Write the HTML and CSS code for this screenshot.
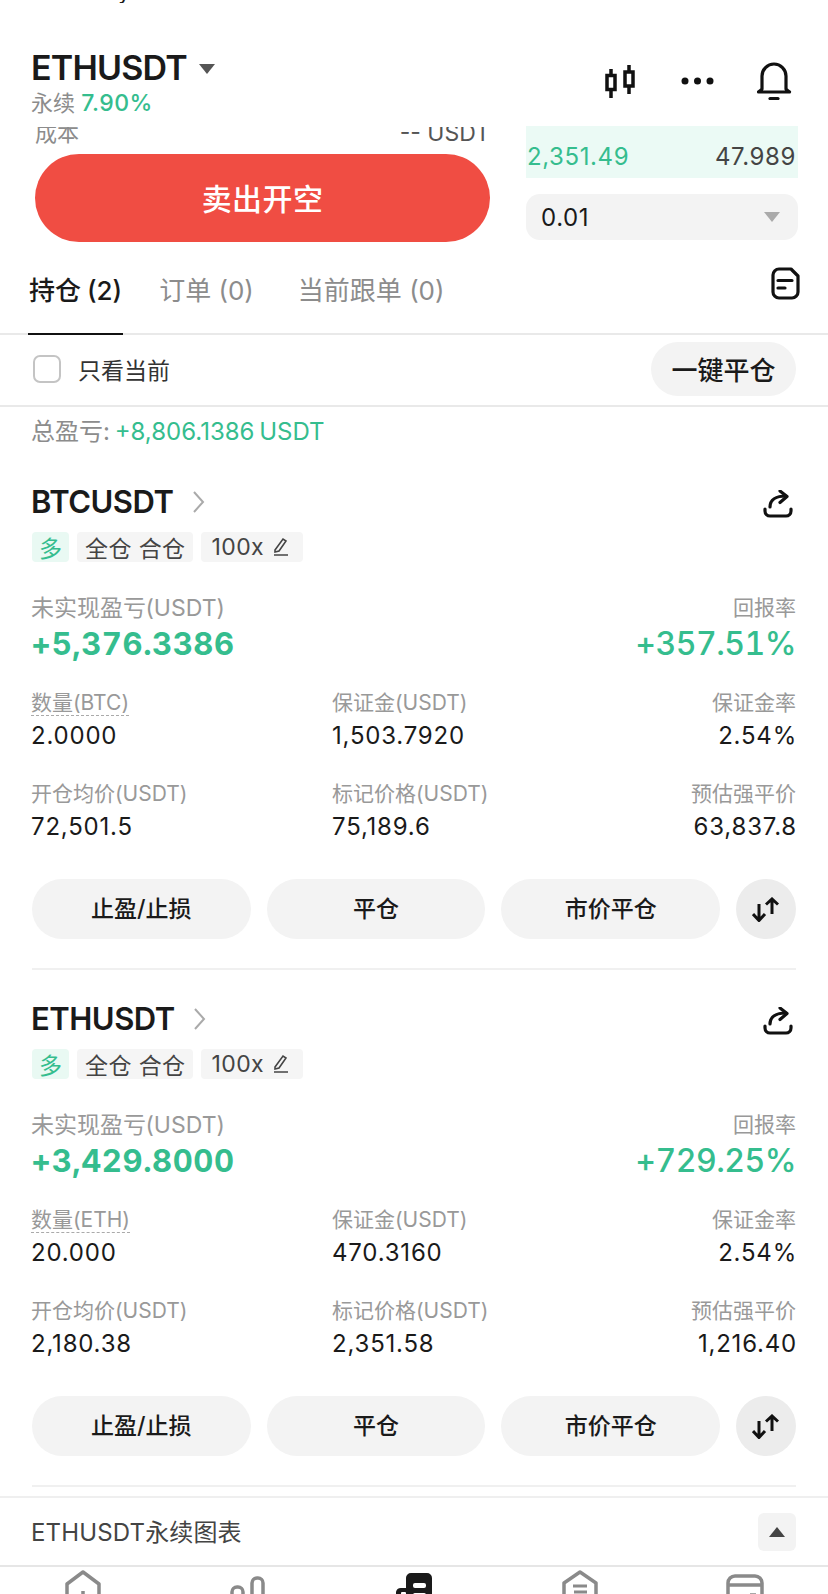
FILE: index.html
```html
<!DOCTYPE html>
<html lang="en">
<head>
    <meta charset="UTF-8">
    <meta name="viewport" content="width=device-width, initial-scale=1.0">
    <title>ETHUSDT 永续</title>
    <link rel="stylesheet" href="styles.css">
</head>
<body>
    <div class="status-clip"><span>y</span></div>

    <!-- Top bar with pair name and actions -->
    <header class="top-bar">
        <div class="pair">
            <div class="pair-name">ETHUSDT <span class="caret"></span></div>
            <div class="pair-sub">永续 <span class="green">7.90%</span></div>
        </div>
        <div class="top-icons">
            <svg width="30" height="33" viewBox="0 0 30 33" fill="none" stroke="#111" stroke-width="3.500"><rect x="2" y="10.500" width="8" height="14"/><rect x="20" y="7" width="8" height="14"/><path d="M6 4v6M6 25v8M24 0v7M24 21v8"/></svg>
            <svg class="dots" width="36" height="8" viewBox="0 0 36 8" fill="#111"><circle cx="5" cy="4" r="3.500"/><circle cx="17.500" cy="4" r="3.500"/><circle cx="30" cy="4" r="3.500"/></svg>
            <svg width="36" height="38" viewBox="0 0 36 38" fill="none" stroke="#111" stroke-width="3.200" stroke-linecap="round" stroke-linejoin="round"><path d="M6 27V14a12 12 0 0 1 24 0v13c1 1.500 2 2.200 3.500 3H2.500C4 29.200 5 28.500 6 27z"/><path d="M14 36.500h8"/></svg>
        </div>
    </header>

    <!-- Order form, scrolled so its top is cut off -->
    <section class="trade">
        <div class="trade-left">
            <div class="cost-clip">
                <span class="cost-label">成本</span>
                <span class="cost-value">-- USDT</span>
            </div>
            <div class="sell-btn">卖出开空</div>
        </div>
        <div class="trade-right">
            <div class="book-row"><span class="green">2,351.49</span><span class="book-size">47.989</span></div>
            <div class="qty-select"><span>0.01</span><span class="caret caret-light"></span></div>
        </div>
    </section>

    <!-- Tabs -->
    <nav class="tabs">
        <div class="tab tab-active">持仓 (2)</div>
        <div class="tab">订单 (0)</div>
        <div class="tab">当前跟单 (0)</div>
        <svg class="tab-icon" width="29" height="33" viewBox="0 0 29 33" fill="none" stroke="#111" stroke-width="3.200" stroke-linecap="round" stroke-linejoin="round"><path d="M8 2h12l7 7v16a6 6 0 0 1-6 6H8a6 6 0 0 1-6-6V8a6 6 0 0 1 6-6z"/><path d="M7 13.500h14M7 21h7"/></svg>
    </nav>

    <div class="filter-row">
        <label class="only-current"><span class="checkbox"></span>只看当前</label>
        <div class="close-all">一键平仓</div>
    </div>

    <div class="total-pnl">总盈亏: <span class="green">+8,806.1386 USDT</span></div>

    <!-- Position cards -->
    <main class="positions">
        <article class="card">
            <div class="card-head">
                <div class="card-title">BTCUSDT <svg class="chevron" width="12" height="22" viewBox="0 0 12 22" fill="none" stroke="#aaa" stroke-width="2"><path d="M1 1l9 10-9 10"/></svg></div>
                <svg width="30" height="28" viewBox="0 0 30 28" fill="none" stroke="#111" stroke-width="3.200" stroke-linecap="round" stroke-linejoin="round"><path d="M2 19v2a5 5 0 0 0 5 5h16a5 5 0 0 0 5-5v-2"/><path d="M7 17c0-7 6-11 16-11"/><path d="M17 1l7 5.500-7 6"/></svg>
            </div>
            <div class="tags">
                <span class="tag tag-long">多</span>
                <span class="tag">全仓 合仓</span>
                <span class="tag tag-lever">100x <svg width="18" height="20" viewBox="0 0 18 20" fill="none" stroke="#444" stroke-width="1.600"><path d="M3 13L11 2l3 2-7 10-4 1zM2 18h14"/></svg></span>
            </div>
            <div class="pnl-row">
                <div><div class="label label-big">未实现盈亏 (USDT)</div><div class="pnl-value">+5,376.3386</div></div>
                <div class="right"><div class="label">回报率</div><div class="rate-value">+357.51%</div></div>
            </div>
            <div class="stats">
                <div><div class="label"><span class="dashed">数量 (BTC)</span></div><div class="value">2.0000</div></div>
                <div><div class="label">保证金 (USDT)</div><div class="value">1,503.7920</div></div>
                <div class="right"><div class="label">保证金率</div><div class="value">2.54%</div></div>
                <div><div class="label">开仓均价 (USDT)</div><div class="value">72,501.5</div></div>
                <div><div class="label">标记价格 (USDT)</div><div class="value">75,189.6</div></div>
                <div class="right"><div class="label">预估强平价</div><div class="value">63,837.8</div></div>
            </div>
            <div class="actions">
                <div class="action">止盈/止损</div>
                <div class="action">平仓</div>
                <div class="action">市价平仓</div>
                <div class="action-round"><svg width="28" height="25" viewBox="0 0 28 25" fill="none" stroke="#111" stroke-width="3"><path d="M7 7v17M1 17l6 6.500 6-6.500M20 17V2M14 7.500L20 2l6 5.500"/></svg></div>
            </div>
        </article>

        <article class="card">
            <div class="card-head">
                <div class="card-title">ETHUSDT <svg class="chevron" width="12" height="22" viewBox="0 0 12 22" fill="none" stroke="#aaa" stroke-width="2"><path d="M1 1l9 10-9 10"/></svg></div>
                <svg width="30" height="28" viewBox="0 0 30 28" fill="none" stroke="#111" stroke-width="3.200" stroke-linecap="round" stroke-linejoin="round"><path d="M2 19v2a5 5 0 0 0 5 5h16a5 5 0 0 0 5-5v-2"/><path d="M7 17c0-7 6-11 16-11"/><path d="M17 1l7 5.500-7 6"/></svg>
            </div>
            <div class="tags">
                <span class="tag tag-long">多</span>
                <span class="tag">全仓 合仓</span>
                <span class="tag tag-lever">100x <svg width="18" height="20" viewBox="0 0 18 20" fill="none" stroke="#444" stroke-width="1.600"><path d="M3 13L11 2l3 2-7 10-4 1zM2 18h14"/></svg></span>
            </div>
            <div class="pnl-row">
                <div><div class="label label-big">未实现盈亏 (USDT)</div><div class="pnl-value">+3,429.8000</div></div>
                <div class="right"><div class="label">回报率</div><div class="rate-value">+729.25%</div></div>
            </div>
            <div class="stats">
                <div><div class="label"><span class="dashed">数量 (ETH)</span></div><div class="value">20.000</div></div>
                <div><div class="label">保证金 (USDT)</div><div class="value">470.3160</div></div>
                <div class="right"><div class="label">保证金率</div><div class="value">2.54%</div></div>
                <div><div class="label">开仓均价 (USDT)</div><div class="value">2,180.38</div></div>
                <div><div class="label">标记价格 (USDT)</div><div class="value">2,351.58</div></div>
                <div class="right"><div class="label">预估强平价</div><div class="value">1,216.40</div></div>
            </div>
            <div class="actions">
                <div class="action">止盈/止损</div>
                <div class="action">平仓</div>
                <div class="action">市价平仓</div>
                <div class="action-round"><svg width="28" height="25" viewBox="0 0 28 25" fill="none" stroke="#111" stroke-width="3"><path d="M7 7v17M1 17l6 6.500 6-6.500M20 17V2M14 7.500L20 2l6 5.500"/></svg></div>
            </div>
        </article>
    </main>

    <!-- Collapsed chart bar -->
    <div class="chart-bar">
        <span class="chart-title">ETHUSDT永续图表</span>
        <div class="chart-toggle"><span class="caret caret-up"></span></div>
    </div>

    <!-- Bottom navigation, cut off by the window -->
    <footer class="bottom-nav">
        <svg width="36" height="34" viewBox="0 0 36 34" fill="none" stroke="#8a8a8a" stroke-width="3.500" stroke-linejoin="round"><path d="M2 16L18 4l16 12v20H2z"/><path d="M18 23v6"/></svg>
        <svg width="36" height="34" viewBox="0 0 36 34" fill="none" stroke="#8a8a8a" stroke-width="3.500"><rect x="2" y="19" width="11" height="24" rx="5"/><rect x="22" y="10" width="11" height="34" rx="5"/></svg>
        <svg width="38" height="34" viewBox="0 0 38 34" fill="#1a1a1a"><path d="M11 10a5 5 0 0 1 5-5h16a5 5 0 0 1 5 5v26H1V24a5 5 0 0 1 5-4h5z"/><rect x="18" y="15" width="13" height="5" rx="2" fill="#fff"/><rect x="18" y="25" width="13" height="5" rx="2" fill="#fff"/><rect x="6" y="24" width="5" height="8" rx="1" fill="#fff"/></svg>
        <svg width="36" height="34" viewBox="0 0 36 34" fill="none" stroke="#8a8a8a" stroke-width="3.500" stroke-linejoin="round"><path d="M2 15L18 4l16 11v24H2z"/><path d="M11 18h14M12 24h13" stroke-width="3"/></svg>
        <svg width="38" height="34" viewBox="0 0 38 34" fill="none" stroke="#8a8a8a" stroke-width="3.500"><rect x="2" y="8" width="34" height="36" rx="7"/><path d="M2 17h34M24 27h6"/></svg>
    </footer>
</body>
</html>
```

FILE: styles.css
```css
/* Global styling */
* {
    box-sizing: border-box;
}
html, body {
    margin: 0;
    height: 1594px;
    overflow: hidden;
}
body {
    font-family: Inter, "Noto Sans CJK SC", sans-serif;
    color: #1a1a1a;
    background: #fff;
}
.green {
    color: #35bd8e;
}
.right {
    text-align: right;
}

/* Triangle carets */
.caret {
    display: inline-block;
    border-left: 8px solid transparent;
    border-right: 8px solid transparent;
    border-top: 10px solid #555;
    vertical-align: middle;
}
.caret-light {
    border-top-color: #aaa;
}
.caret-up {
    border-top: 0;
    border-bottom: 10px solid #444;
}

.status-clip {
    height: 3px;
    padding-left: 118px;
    overflow: hidden;
    font-size: 22px;
    line-height: 3px;
}
.status-clip span {
    display: block;
    margin-top: -10px;
}

/* Top bar */
.top-bar {
    height: 122px;
    padding: 43px 36px 0 31px;
    display: flex;
    justify-content: space-between;
}
.pair-name {
    font-size: 34px;
    line-height: 44px;
    font-weight: 600;
    letter-spacing: -0.8px;
}
.pair-name .caret {
    margin: -4px 0 0 4px;
}
.pair-sub {
    font-size: 22px;
    line-height: 28px;
    color: #8c8c8c;
    margin-top: -1px;
}
.pair-sub .green {
    font-size: 23px;
    font-weight: 500;
    letter-spacing: 0.5px;
}
.top-icons {
    display: flex;
    align-items: center;
    gap: 45px;
    height: 70px;
}
.top-icons .dots {
    margin-right: -5px;
}

/* Order form */
.trade {
    display: flex;
    justify-content: space-between;
    height: 117px;
    padding: 0 30px 0 35px;
}
.trade-left {
    width: 455px;
}
.cost-clip {
    height: 27px;
    margin-top: 2px;
    overflow: hidden;
    display: flex;
    justify-content: space-between;
    font-size: 22px;
    line-height: 24px;
    color: #555;
}
.cost-label {
    margin-top: -6px;
    color: #8c8c8c;
}
.cost-value {
    margin-top: -6px;
    font-size: 23px;
}
.sell-btn {
    height: 88px;
    border-radius: 44px;
    background: #f04d43;
    color: #fff;
    font-size: 30px;
    font-weight: 500;
    line-height: 90px;
    letter-spacing: 0.4px;
    text-align: center;
}
.trade-right {
    width: 272px;
    padding-top: 1px;
}
.book-row {
    height: 52px;
    padding: 9px 2px 0 1px;
    display: flex;
    justify-content: space-between;
    align-items: center;
    background: #ebfaf5;
    font-size: 24px;
    letter-spacing: 0.6px;
}
.book-size {
    color: #444;
}
.qty-select {
    height: 46px;
    margin-top: 16px;
    padding: 0 18px 0 15px;
    display: flex;
    justify-content: space-between;
    align-items: center;
    border-radius: 14px;
    background: #f3f3f3;
    font-size: 24px;
    letter-spacing: 0.6px;
}

/* Tabs */
.tabs {
    height: 93px;
    padding: 0 28px;
    display: flex;
    border-bottom: 2px solid #e9e9e9;
    position: relative;
}
.tab {
    margin-right: 42px;
    height: 91px;
    padding: 0 1px;
    line-height: 98px;
    font-size: 26px;
    color: #8c8c8c;
}
.tab-active {
    margin-right: 35px;
    color: #1a1a1a;
    font-weight: 500;
    word-spacing: -1px;
    border-bottom: 2px solid #111;
    height: 93px;
}
.tab-icon {
    margin: 25px 0 0 auto;
}

.filter-row {
    height: 72px;
    padding: 0 32px 2px 33px;
    display: flex;
    justify-content: space-between;
    align-items: center;
    border-bottom: 2px solid #e9e9e9;
}
.only-current {
    display: flex;
    align-items: center;
    gap: 17px;
    font-size: 23px;
    color: #333;
}
.checkbox {
    width: 28px;
    height: 28px;
    border: 2px solid #c4c4c4;
    border-radius: 7px;
}
.close-all {
    width: 145px;
    height: 54px;
    border-radius: 27px;
    background: #f3f3f3;
    font-size: 26px;
    font-weight: 500;
    line-height: 58px;
    text-align: center;
}

.total-pnl {
    height: 52px;
    padding: 11px 32px 0 31px;
    font-size: 24px;
    line-height: 28px;
    word-spacing: -2px;
    color: #8c8c8c;
}

/* Position cards */
.positions {
    padding: 25px 32px 0;
}
.card {
    height: 486px;
    margin-bottom: 31px;
    padding-top: 2px;
    border-bottom: 2px solid #f0f0f0;
}
.card:last-child {
    margin-bottom: 0;
}
.card-head {
    height: 32px;
    display: flex;
    justify-content: space-between;
    align-items: center;
}
.card-head > svg {
    margin-right: 3px;
    margin-top: 4px;
}
.card-title {
    margin-left: -1px;
    font-size: 31px;
    line-height: 32px;
    font-weight: 600;
    letter-spacing: -0.5px;
}
.chevron {
    margin-left: 12px;
}
.tags {
    display: flex;
    gap: 8px;
    margin-top: 14px;
}
.tag {
    height: 30px;
    padding: 0 8px;
    display: flex;
    align-items: center;
    gap: 8px;
    border-radius: 4px;
    background: #f5f5f5;
    font-size: 23px;
    letter-spacing: 0.4px;
    color: #444;
}
.tag-long {
    width: 37px;
    padding: 0 7px;
    background: #e9f9f3;
    color: #35bd8e;
}
.tag-lever {
    width: 102px;
    padding: 0 10px;
}
.pnl-row {
    display: flex;
    justify-content: space-between;
    margin-top: 31px;
}
.label {
    font-size: 21px;
    line-height: 30px;
    word-spacing: -6px;
    color: #999;
}
.label-big {
    margin-left: -1px;
    font-size: 23px;
    word-spacing: -7px;
}
.dashed {
    border-bottom: 1px dashed #aaa;
}
.pnl-value {
    margin-left: -1px;
    font-size: 31px;
    line-height: 42px;
    font-weight: 700;
    letter-spacing: 0.6px;
    font-variant-numeric: tabular-nums;
    color: #35bd8e;
}
.rate-value {
    font-size: 32px;
    line-height: 42px;
    font-weight: 500;
    letter-spacing: -0.5px;
    font-variant-numeric: tabular-nums;
    color: #35bd8e;
}
.stats {
    display: grid;
    grid-template-columns: 301px 1fr auto;
    row-gap: 25px;
    margin: 23px 0 0 -1px;
}
.value {
    font-size: 24px;
    line-height: 36px;
    letter-spacing: 0.8px;
}
.stats .right .value {
    margin-right: -1px;
}
.actions {
    display: flex;
    gap: 16px;
    margin-top: 34px;
}
.action {
    width: 219px;
    height: 60px;
    border-radius: 30px;
    background: #f3f3f3;
    font-size: 23px;
    font-weight: 500;
    line-height: 60px;
    text-align: center;
}
.action-round {
    width: 60px;
    height: 60px;
    border-radius: 50%;
    background: #ececec;
    display: flex;
    align-items: center;
    justify-content: center;
}

/* Chart bar */
.chart-bar {
    height: 71px;
    margin-top: 9px;
    padding: 0 32px 0 31px;
    display: flex;
    justify-content: space-between;
    align-items: center;
    border-top: 2px solid #efefef;
    border-bottom: 2px solid #e6e6e6;
    font-size: 24px;
    color: #444;
}
.chart-title {
    margin-top: -3px;
    letter-spacing: 0.15px;
}
.chart-toggle {
    width: 38px;
    height: 38px;
    border-radius: 6px;
    background: #f3f3f3;
    display: flex;
    align-items: center;
    justify-content: center;
}

/* Bottom navigation */
.bottom-nav {
    height: 34px;
    padding-top: 1px;
    display: grid;
    grid-template-columns: repeat(5, 1fr);
    justify-items: center;
    overflow: hidden;
}
```
